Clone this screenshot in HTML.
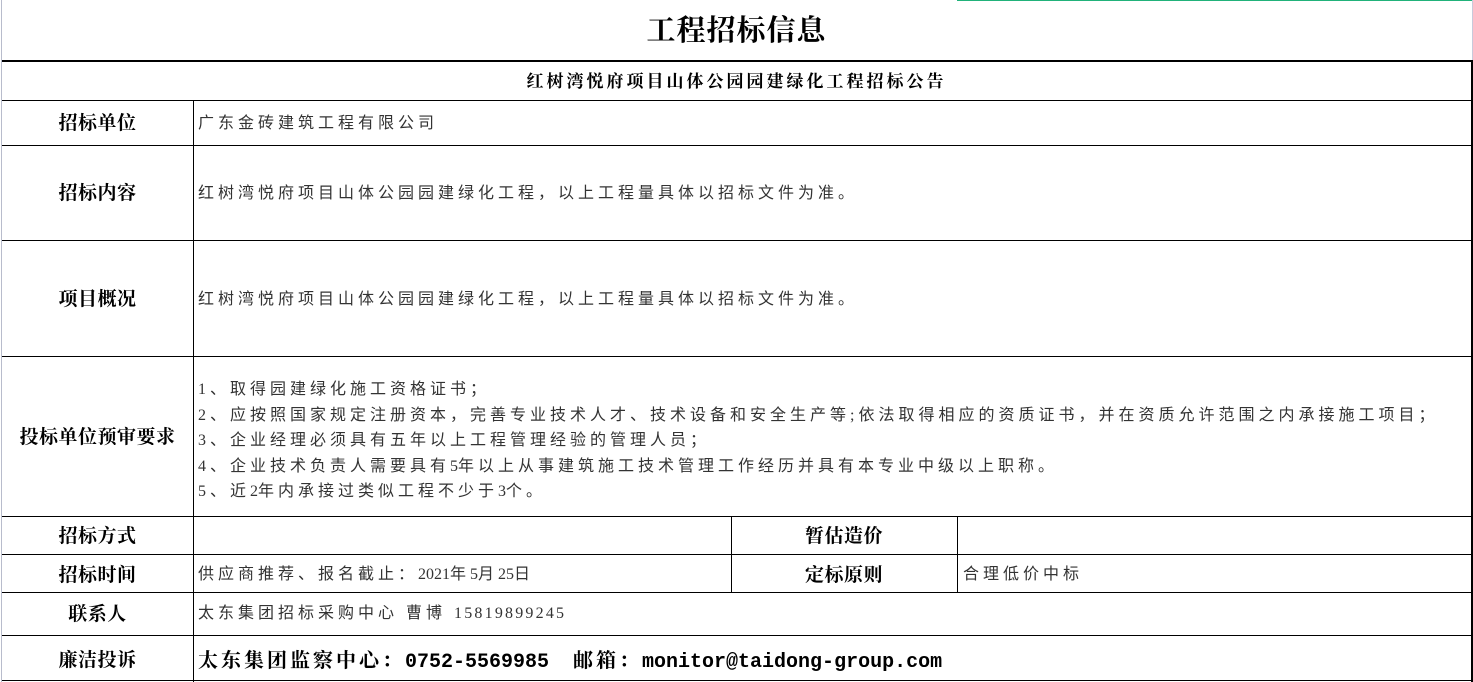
<!DOCTYPE html>
<html><head><meta charset="utf-8">
<style>
*{margin:0;padding:0;box-sizing:border-box}
body{width:1473px;height:682px;background:#fff;position:relative;overflow:hidden;font-family:"Liberation Serif","Noto Serif CJK SC",serif;color:#000}
.h{position:absolute;height:1px;background:#000}
.v{position:absolute;width:1px;background:#000}
.t{position:absolute;white-space:nowrap;line-height:1}
.lab{font-weight:bold;font-size:19px;letter-spacing:0.5px;text-align:center}
.c{font-size:16px;letter-spacing:4px;color:#333;font-family:"Liberation Serif","Noto Sans CJK SC",sans-serif}
.d{letter-spacing:0;font-size:16px;font-family:"Liberation Serif",serif}
</style></head><body>
<div style="position:absolute;left:957px;top:0;width:516px;height:1px;background:#21b27a"></div>
<div style="position:absolute;left:1px;top:0;width:1px;height:682px;background:#b8bccc"></div>
<div style="position:absolute;left:1472px;top:0;width:1px;height:60px;background:#c8cadb"></div>
<div class="h" style="left:2px;top:60px;width:1471px;height:2px"></div>
<div class="v" style="left:1471px;top:60px;height:622px;width:2px"></div>
<div class="h" style="left:2px;top:100px;width:1470px"></div>
<div class="h" style="left:2px;top:145px;width:1470px"></div>
<div class="h" style="left:2px;top:240px;width:1470px"></div>
<div class="h" style="left:2px;top:356px;width:1470px"></div>
<div class="h" style="left:2px;top:516px;width:1470px"></div>
<div class="h" style="left:2px;top:554px;width:1470px"></div>
<div class="h" style="left:2px;top:592px;width:1470px"></div>
<div class="h" style="left:2px;top:635px;width:1470px"></div>
<div class="h" style="left:2px;top:680px;width:1470px"></div>
<div class="v" style="left:193px;top:100px;height:582px"></div>
<div class="v" style="left:731px;top:516px;height:77px"></div>
<div class="v" style="left:957px;top:516px;height:77px"></div>

<div class="t" style="left:0;width:1473px;top:17px;text-align:center;font-size:29px;font-weight:bold;letter-spacing:1px">工程招标信息</div>
<div class="t" style="left:0;width:1473px;top:73px;text-align:center;font-size:17px;font-weight:bold;letter-spacing:3px">红树湾悦府项目山体公园园建绿化工程招标公告</div>

<div class="t lab" style="left:2px;width:191px;top:114px">招标单位</div>
<div class="t lab" style="left:2px;width:191px;top:184px">招标内容</div>
<div class="t lab" style="left:2px;width:191px;top:290px">项目概况</div>
<div class="t lab" style="left:2px;width:191px;top:428px">投标单位预审要求</div>
<div class="t lab" style="left:2px;width:191px;top:527px">招标方式</div>
<div class="t lab" style="left:2px;width:191px;top:566px">招标时间</div>
<div class="t lab" style="left:2px;width:191px;top:605px">联系人</div>
<div class="t lab" style="left:2px;width:191px;top:651px">廉洁投诉</div>
<div class="t lab" style="left:731px;width:226px;top:527px">暂估造价</div>
<div class="t lab" style="left:731px;width:226px;top:566px">定标原则</div>

<div class="t c" style="left:198px;top:116px">广东金砖建筑工程有限公司</div>
<div class="t c" style="left:198px;top:186px">红树湾悦府项目山体公园园建绿化工程，以上工程量具体以招标文件为准。</div>
<div class="t c" style="left:198px;top:292px">红树湾悦府项目山体公园园建绿化工程，以上工程量具体以招标文件为准。</div>
<div class="t c" style="left:198px;top:377px;line-height:25.5px">1、取得园建绿化施工资格证书；<br>2、应按照国家规定注册资本，完善专业技术人才、技术设备和安全生产等;依法取得相应的资质证书，并在资质允许范围之内承接施工项目；<br>3、企业经理必须具有五年以上工程管理经验的管理人员；<br>4、企业技术负责人需要具有<span class="d">5</span>年以上从事建筑施工技术管理工作经历并具有本专业中级以上职称。<br>5、近<span class="d">2</span>年内承接过类似工程不少于<span class="d">3</span>个。</div>
<div class="t c" style="left:198px;top:567px">供应商推荐、报名截止：<span class="d">2021</span>年<span class="d">5</span>月<span class="d">25</span>日</div>
<div class="t c" style="left:963px;top:567px">合理低价中标</div>
<div class="t c" style="left:198px;top:606px">太东集团招标采购中心 曹博 <span class="d" style="letter-spacing:2.2px">15819899245</span></div>
<div class="t" style="left:198px;top:651px;font-size:20px;font-weight:bold;letter-spacing:3px">太东集团监察中心：<span style="font-family:'Liberation Mono',monospace;letter-spacing:0">0752-5569985</span>&nbsp;&nbsp; 邮箱：<span style="font-family:'Liberation Mono',monospace;letter-spacing:0">monitor@taidong-group.com</span></div>
</body></html>
